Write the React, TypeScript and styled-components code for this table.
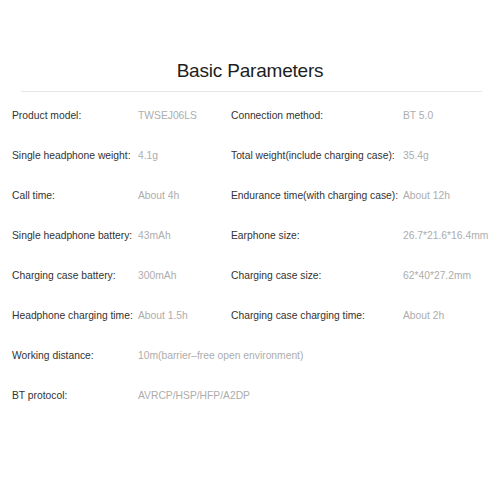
import {createGlobalStyle, styled} from 'styled-components';

type Spec = {label: string; value: string; label2?: string; value2?: string};

const specs: Spec[] = [
  {label: 'Product model:', value: 'TWSEJ06LS', label2: 'Connection method:', value2: 'BT 5.0'},
  {label: 'Single headphone weight:', value: '4.1g', label2: 'Total weight(include charging case):', value2: '35.4g'},
  {label: 'Call time:', value: 'About 4h', label2: 'Endurance time(with charging case):', value2: 'About 12h'},
  {label: 'Single headphone battery:', value: '43mAh', label2: 'Earphone size:', value2: '26.7*21.6*16.4mm'},
  {label: 'Charging case battery:', value: '300mAh', label2: 'Charging case size:', value2: '62*40*27.2mm'},
  {label: 'Headphone charging time:', value: 'About 1.5h', label2: 'Charging case charging time:', value2: 'About 2h'},
  {label: 'Working distance:', value: '10m(barrier\u2013free open environment)'},
  {label: 'BT protocol:', value: 'AVRCP/HSP/HFP/A2DP'},
];

const Global = createGlobalStyle`
  html, body {
    margin: 0;
    padding: 0;
    background: #fff;
  }
  body {
    font-family: 'Liberation Sans', Arial, sans-serif;
  }
`;

const Page = styled.div`
  width: 500px;
  height: 500px;
  box-sizing: border-box;
  padding-top: 59px;
  background: #fff;
`;

const Title = styled.h1`
  margin: 0;
  font-size: 19px;
  font-weight: 400;
  line-height: 24px;
  text-align: center;
  color: #1e1e1e;
  letter-spacing: -0.2px;
`;

const Rule = styled.div`
  margin: 8px 18px 3px 21px;
  height: 1px;
  background: #e6e6e6;
`;

const Table = styled.div`
  padding-left: 12px;
`;

const Row = styled.div`
  display: grid;
  grid-template-columns: 126px 93px 172px 1fr;
  height: 40px;
  align-items: center;
  font-size: 10.3px;
  white-space: nowrap;
`;

const Label = styled.span`
  color: #333;
`;

const Value = styled.span<{$wide?: boolean}>`
  color: #adadad;
  grid-column: ${({$wide}) => ($wide ? '2 / 5' : 'auto')};
`;

export default function App() {
  return (
    <Page>
      <Global />
      <Title>Basic Parameters</Title>
      <Rule />
      <Table>
        {specs.map((s) => (
          <Row key={s.label}>
            <Label>{s.label}</Label>
            <Value $wide={!s.label2}>{s.value}</Value>
            {s.label2 && <Label>{s.label2}</Label>}
            {s.value2 && <Value>{s.value2}</Value>}
          </Row>
        ))}
      </Table>
    </Page>
  );
}
